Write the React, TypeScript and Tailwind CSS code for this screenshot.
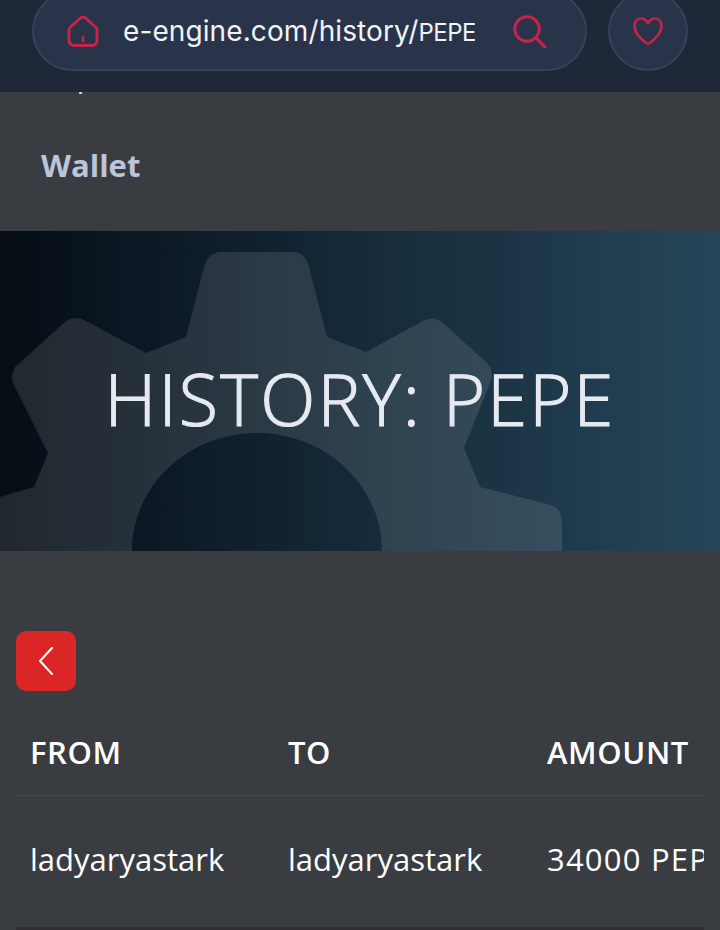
const rows = [{ from: 'ladyaryastark', to: 'ladyaryastark', amount: '34000 PEPE' }];

function HomeIcon() {
  return (
    <svg width="32" height="32" viewBox="0 0 32 32" fill="none" stroke="#c9234a" strokeWidth="2.8" strokeLinejoin="round" strokeLinecap="round">
      <path d="M3 12.5 L13.5 3 Q16 1.2 18.5 3 L29 12.5 Q30 13.5 30 15 L30 25 Q30 30.5 24.5 30.5 L7.5 30.5 Q2 30.5 2 25 L2 15 Q2 13.5 3 12.5 Z" />
      <path d="M16 22.5 V26" />
    </svg>
  );
}

function SearchIcon() {
  return (
    <svg width="34" height="34" viewBox="0 0 34 34" fill="none" stroke="#c9234a" strokeWidth="3" strokeLinecap="round">
      <circle cx="14" cy="15" r="12.2" />
      <path d="M23 24 L32 33" />
    </svg>
  );
}

function HeartIcon() {
  return (
    <svg width="30" height="28" viewBox="0 0 30 28" fill="none" stroke="#c9234a" strokeWidth="2.6" strokeLinejoin="round">
      <path d="M15 6 C13 2.5 10.5 1.5 8 1.5 C4 1.5 1.5 5 1.5 9.5 C1.5 16 8 22 13 26 Q15 27.2 17 26 C22 22 28.5 16 28.5 9.5 C28.5 5 26 1.5 22 1.5 C19.5 1.5 17 2.5 15 6 Z" />
    </svg>
  );
}

function Gear() {
  return (
    <svg className="absolute inset-0" width="720" height="320" viewBox="0 0 720 320" fill="#ffffff" fillOpacity="0.11">
      <path
        fillRule="evenodd"
        d="M0 266 L34 256 L48 222 L13 152 Q10 144 15 136 L66 90 Q76 84 86 90 L146 122 L186 106 L204 36 Q208 21 222 21 L292 21 Q305 21 309 36 L327 106 L366 121 L423 90 Q433 84 443 92 L487 132 Q495 142 490 152 L464 217 L480 256 L551 274 Q562 278 562 292 L562 320 L0 320 Z M132 320 C132 255 188 202 257 202 C326 202 382 255 382 320 Z"
      />
    </svg>
  );
}

export default function App() {
  return (
    <div className="h-[930px] w-[720px] overflow-hidden bg-[#393c41] font-['Open_Sans',sans-serif]">
      <header className="flex h-[92px] items-end overflow-hidden bg-[#1f2838] pb-[21px] pl-8">
        <div className="flex h-[80px] w-[555px] shrink-0 items-center rounded-full border-2 border-[#36425a] bg-[#29334a] pl-[33px]">
          <HomeIcon />
          <div className="ml-[24px] w-[352px] overflow-hidden whitespace-nowrap font-['Inter',sans-serif] text-[28px] tracking-[0.1px] text-[#f1f3f7]">
            e-engine.com/history/<span className="text-[24px] tracking-[-0.5px]">PEPE</span>
          </div>
          <div className="ml-[38px]">
            <SearchIcon />
          </div>
        </div>
        <div className="ml-[21px] flex h-[80px] w-[80px] shrink-0 items-center justify-center rounded-full border-2 border-[#36425a] bg-[#29334a]">
          <HeartIcon />
        </div>
      </header>

      <nav className="relative h-[139px] px-[41px] pt-[53px]">
        <span className="absolute left-[79px] top-0 h-[2px] w-[3px] bg-[#c8cfdd]" />
        <a className="text-[31px] font-bold leading-[40px] text-[#bcc5da]">Wallet</a>
      </nav>

      <section className="relative flex h-[320px] items-center justify-center overflow-hidden bg-gradient-to-r from-[#060d15] via-[#152a39] to-[#264659]">
        <Gear />
        <h1 className="relative pt-[14px] text-[72px] font-light leading-none tracking-[2.2px] text-[#e6e9f0] [-webkit-text-stroke:1.2px_#e6e9f0]">HISTORY: PEPE</h1>
      </section>

      <div className="px-4 pt-[80px]">
        <button className="flex h-[60px] w-[60px] items-center justify-center rounded-[10px] bg-[#dc2626]">
          <svg width="18" height="30" viewBox="0 0 18 30" fill="none" stroke="#ffffff" strokeWidth="2" strokeLinecap="round" strokeLinejoin="round">
            <path d="M15 2 L3 15 L15 28" />
          </svg>
        </button>

        <div className="mt-[17px] w-[688px] overflow-hidden">
          <table className="w-[720px] table-fixed text-left text-[31px] text-white">
            <thead>
              <tr className="h-[87px] border-b border-[#45474c]">
                <th className="w-[258px] pl-[14px] pt-[2px] font-semibold tracking-[0.6px]">FROM</th>
                <th className="w-[259px] pl-[14px] pt-[2px] font-semibold tracking-[0.6px]">TO</th>
                <th className="pl-[14px] pt-[2px] font-semibold tracking-[0.6px]">AMOUNT</th>
              </tr>
            </thead>
            <tbody>
              {rows.map((row, i) => (
                <tr key={i} className="h-[133px] border-b-[3px] border-[#2e3034]">
                  <td className="pb-[4px] pl-[14px]">{row.from}</td>
                  <td className="pb-[4px] pl-[14px]">{row.to}</td>
                  <td className="whitespace-nowrap pb-[4px] pl-[14px] tracking-[1.2px]">{row.amount}</td>
                </tr>
              ))}
            </tbody>
          </table>
        </div>
      </div>
    </div>
  );
}
